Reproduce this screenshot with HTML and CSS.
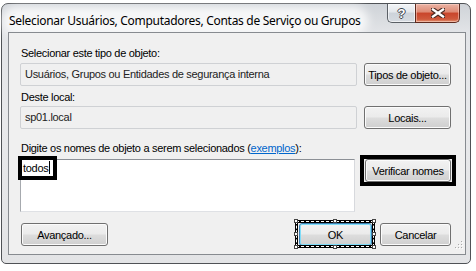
FILE: index.html
```html
<!DOCTYPE html>
<html lang="pt">

<head>
    <meta charset="UTF-8">
    <title>Selecionar Usuários, Computadores, Contas de Serviço ou Grupos</title>
    <link rel="stylesheet" href="styles.css">
</head>

<body>
    <div class="window">
        <!-- Title bar -->
        <div class="titlebar">
            <span class="title">Selecionar Usuários, Computadores, Contas de Serviço ou Grupos</span>
            <div class="caption">
                <span class="cap-btn help"><span class="help-mark">?</span></span>
                <span class="cap-btn close">
                    <svg width="14" height="10" viewBox="0 0 14 10">
                        <path d="M2 1.5 L12 8.5 M12 1.5 L2 8.5" stroke="#4a2a22" stroke-width="4.6" stroke-linecap="square" fill="none"/>
                        <path d="M2 1.5 L12 8.5 M12 1.5 L2 8.5" stroke="#fff" stroke-width="2.4" stroke-linecap="square" fill="none"/>
                    </svg>
                </span>
            </div>
        </div>

        <div class="client">
            <div class="label first">Selecionar este tipo de objeto:</div>
            <div class="row row-type">
                <div class="field">Usuários, Grupos ou Entidades de segurança interna</div>
                <button class="btn">Tipos de objeto...</button>
            </div>

            <div class="label second">Deste local:</div>
            <div class="row row-local">
                <div class="field">sp01.local</div>
                <button class="btn">Locais...</button>
            </div>

            <div class="label third">Digite os nomes de objeto a serem selecionados (<a href="#" class="link">exemplos</a>):</div>
            <div class="row row-names">
                <div class="names-box">
                    <span class="typed">todos<span class="caret"></span></span>
                </div>
                <div class="mark-frame">
                    <button class="btn btn-check">Verificar nomes</button>
                </div>
            </div>

            <div class="row row-bottom">
                <button class="btn btn-advanced">Avançado...</button>
                <span class="ok-wrap">
                    <button class="btn btn-ok">OK</button>
                    <span class="select-frame">
                        <i class="hd tl"></i><i class="hd tc"></i><i class="hd tr"></i>
                        <i class="hd ml"></i><i class="hd mr"></i>
                        <i class="hd bl"></i><i class="hd bc"></i><i class="hd br"></i>
                    </span>
                </span>
                <button class="btn btn-cancel">Cancelar</button>
                <svg class="grip" width="8" height="8" viewBox="0 0 8 8">
                    <rect x="6" y="0" width="1" height="1" fill="#a9a9a9"/>
                    <rect x="3" y="3" width="1" height="1" fill="#a9a9a9"/>
                    <rect x="6" y="3" width="1" height="1" fill="#a9a9a9"/>
                    <rect x="0" y="6" width="1" height="1" fill="#a9a9a9"/>
                    <rect x="3" y="6" width="1" height="1" fill="#a9a9a9"/>
                    <rect x="6" y="6" width="1" height="1" fill="#a9a9a9"/>
                    <rect x="7" y="1" width="1" height="1" fill="#fff"/>
                    <rect x="4" y="4" width="1" height="1" fill="#fff"/>
                    <rect x="7" y="4" width="1" height="1" fill="#fff"/>
                    <rect x="1" y="7" width="1" height="1" fill="#fff"/>
                    <rect x="4" y="7" width="1" height="1" fill="#fff"/>
                    <rect x="7" y="7" width="1" height="1" fill="#fff"/>
                </svg>
            </div>
        </div>
    </div>
</body>

</html>
```

FILE: styles.css
```css
* {
    box-sizing: border-box;
}

body {
    margin: 0;
    background: #fff;
    font-family: "Liberation Sans", Arial, sans-serif;
}

.window {
    width: 470px;
    height: 261px;
    margin: 3px 0 0 1px;
    padding: 0 4px 8px 6px;
    border: 1px solid #4f5256;
    border-radius: 7px 7px 5px 5px;
    background: linear-gradient(#cfd3d8, #e2e4e7 28px, #e8e9eb 120px, #e3e4e6);
    display: flex;
    flex-direction: column;
}

/* Title bar */
.titlebar {
    height: 28px;
    display: flex;
    align-items: flex-start;
}

.title {
    margin: 9px 0 0 1px;
    font-family: "Noto Sans", "Open Sans", sans-serif;
    font-size: 12px;
    line-height: 15px;
    letter-spacing: -0.3px;
    color: #000;
    background: rgba(255, 255, 255, 0.75);
    border-radius: 8px;
    box-shadow: 0 0 10px 7px rgba(255, 255, 255, 0.8);
}

.caption {
    margin-left: auto;
    margin-right: 6px;
    display: flex;
}

.cap-btn {
    height: 19px;
    display: flex;
    align-items: center;
    justify-content: center;
    border: 1px solid #5b6066;
    border-top: none;
}

.help {
    width: 28px;
    border-right: none;
    border-radius: 0 0 0 5px;
    background: linear-gradient(#f3f5f7, #e3e7eb 45%, #cdd3da 50%, #d6dbe1);
    box-shadow: inset 0 0 0 1px rgba(255, 255, 255, 0.6);
}

.help-mark {
    font-weight: bold;
    font-size: 13px;
    line-height: 13px;
    color: #fff;
    text-shadow: 1px 0 #3e454d, -1px 0 #3e454d, 0 1px #3e454d, 0 -1px #3e454d;
}

.close {
    width: 45px;
    border-radius: 0 0 5px 0;
    border-color: #5e2a1f;
    background: linear-gradient(#eab3a4, #de8a74 45%, #c9452b 50%, #cf5a3d 85%, #e59a78);
    box-shadow: inset 0 0 0 1px rgba(255, 220, 210, 0.5);
}

/* Client area */
.client {
    width: 458px;
    height: 223px;
    border: 1px solid #878b90;
    background: #f0f0f0;
    padding: 0 0 0 11px;
    font-size: 11px;
    letter-spacing: -0.3px;
}

.label {
    line-height: 14px;
    padding-left: 1px;
    color: #000;
}

.label.first {
    margin-top: 13px;
}

.label.second {
    margin-top: 4px;
}

.label.third {
    margin-top: 12px;
}

.link {
    color: #0066cc;
}

.row {
    display: flex;
    align-items: flex-start;
}

.row-type {
    margin-top: 3px;
}

.row-local {
    margin-top: 2px;
}

.field {
    width: 337px;
    height: 23px;
    margin-right: 7px;
    padding: 0 4px;
    line-height: 21px;
    border: 1px solid #cfd1d4;
    border-radius: 2px;
    background: #f0f0f0;
    color: #222;
}

.btn {
    width: 87px;
    height: 23px;
    padding: 0;
    font-family: inherit;
    font-size: 11px;
    letter-spacing: -0.3px;
    color: #000;
    border: 1px solid #707070;
    border-radius: 3px;
    background: linear-gradient(#f2f2f2, #ebebeb 48%, #dddddd 52%, #cfcfcf);
    box-shadow: inset 0 0 0 1px #fbfbfb;
}

/* Names input */
.names-box {
    width: 335px;
    height: 53px;
    margin-top: 4px;
    margin-right: 5px;
    background: #fff;
    border: 1px solid #a6a9ae;
    border-top-color: #8c9096;
    border-bottom-color: #dfe1e5;
    border-right-color: #d7d9dd;
}

.typed {
    display: inline-block;
    height: 24px;
    margin: -4px 0 0 -3px;
    padding: 0 3px 0 1px;
    border: 4px solid #000;
    background: #fff;
    line-height: 16px;
    color: #000;
}

.caret {
    display: inline-block;
    width: 1px;
    height: 13px;
    margin-left: 1px;
    vertical-align: -2px;
    background: #000;
}

.mark-frame {
    display: flex;
    padding: 0 1px;
    border: 4px solid #000;
}

.btn-check {
    width: 86px;
}

/* Bottom buttons */
.row-bottom {
    margin-top: 11px;
    align-items: flex-end;
}

.btn-advanced {
    margin-left: 1px;
}

.ok-wrap {
    position: relative;
    margin-left: auto;
    display: flex;
}

.btn-ok {
    width: 73px;
    border-color: #3c7fb1;
    box-shadow: inset 0 0 0 1px #7fdcf8;
}

.select-frame {
    position: absolute;
    left: -4px;
    right: -3px;
    top: -3px;
    bottom: -2px;
    border: 3px solid #000;
    outline: 1px dashed #fff;
    outline-offset: -2px;
}

.hd {
    position: absolute;
    width: 4px;
    height: 4px;
    background: #fff;
    border: 1px solid #444;
}

.hd.tl { left: -4px; top: -4px; }
.hd.tc { left: calc(50% - 2px); top: -4px; }
.hd.tr { right: -4px; top: -4px; }
.hd.ml { left: -4px; top: calc(50% - 2px); }
.hd.mr { right: -4px; top: calc(50% - 2px); }
.hd.bl { left: -4px; bottom: -4px; }
.hd.bc { left: calc(50% - 2px); bottom: -4px; }
.hd.br { right: -4px; bottom: -4px; }

.btn-cancel {
    width: 71px;
    margin-left: 8px;
}

.grip {
    margin: 0 2px -3px 4px;
}
```
